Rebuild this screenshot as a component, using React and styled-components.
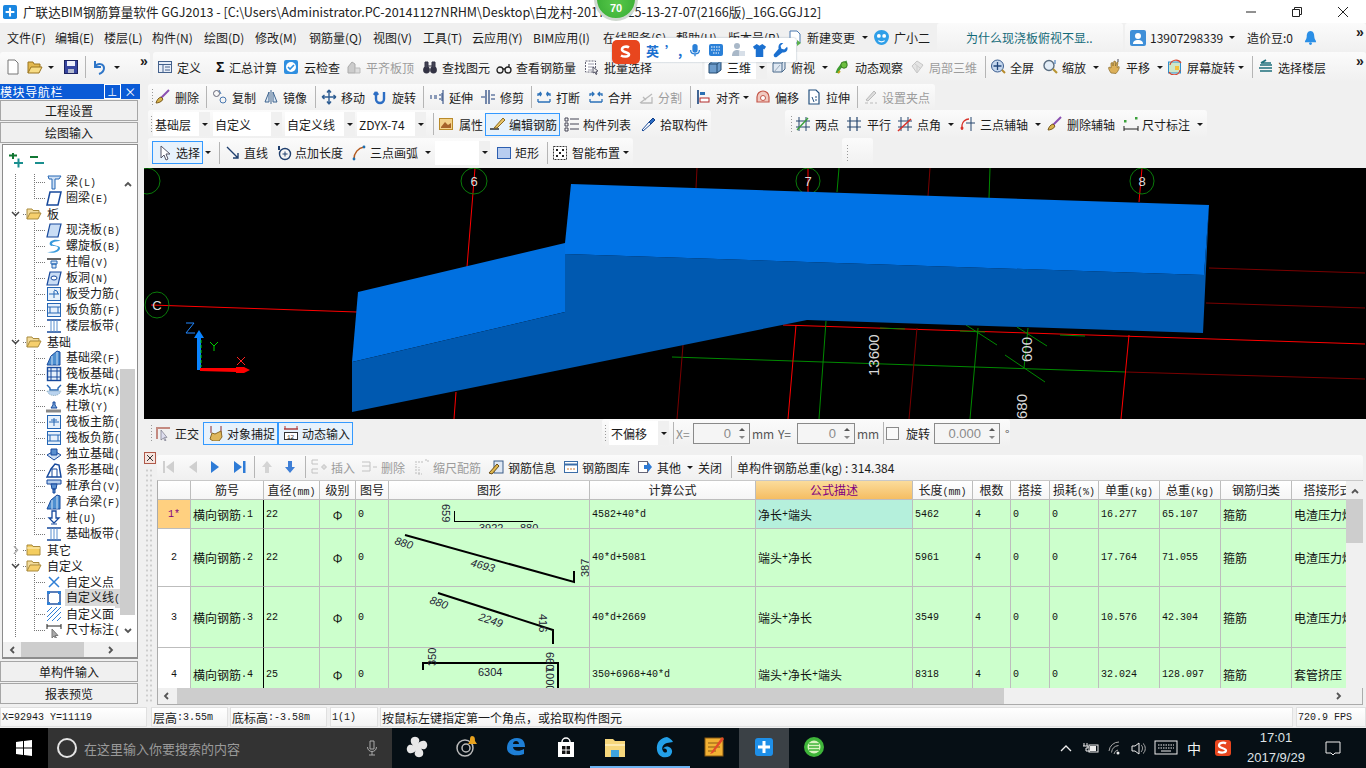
import React from 'react'
import styled, { createGlobalStyle } from 'styled-components'

const CJK = '"Noto Sans CJK SC", "Noto Sans", sans-serif'
const MONO = '"Liberation Mono", "DejaVu Sans Mono", monospace'

const GlobalStyle = createGlobalStyle`
  html, body { margin: 0; padding: 0; background: #f0f0f0; }
  body { font-family: ${CJK}; font-size: 12px; color: #1a1a1a; }
`

const Screen = styled.div`
  position: relative;
  width: 1366px;
  height: 768px;
  overflow: hidden;
  display: flex;
  flex-direction: column;
  background: #f0f0f0;
`

/* ---------- icons ---------- */
const Svg = styled.svg`
  flex: none;
  display: block;
  width: ${p => p.$s || 16}px;
  height: ${p => p.$s || 16}px;
`

const Ico = {
  page: <path d="M3 1h7l3 3v11H3z" fill="#fff" stroke="#777" />,
  open: <><path d="M1 14V3h5l1 2h6v3" fill="#e3b94f" stroke="#9a7420" /><path d="M1 14l3-6h11l-3 6z" fill="#f7dc85" stroke="#9a7420" /></>,
  save: <><rect x="1.5" y="1.5" width="13" height="13" fill="#37459f" stroke="#1c2360" /><rect x="4" y="2" width="8" height="5" fill="#eef0fa" /><rect x="5" y="10" width="6" height="4" fill="#b5bcd0" /></>,
  undo: <path d="M4 2v6h6M4 8c3-5 9-3 9 1 0 3-2 5-5 6" fill="none" stroke="#2f76c8" strokeWidth="2" />,
  define: <><rect x="1.5" y="2.5" width="13" height="11" fill="#e8eef8" stroke="#44618c" /><path d="M1.5 5.500h13M6 5.500v8M8 8h5M8 11h5" stroke="#44618c" /></>,
  sigma: <text x="3" y="13" fontSize="14" fontWeight="700" fill="#111" fontFamily="Liberation Sans">Σ</text>,
  cloud: <><rect x="1" y="1" width="14" height="14" rx="2" fill="#2f8fe0" /><circle cx="8" cy="8" r="5" fill="#fff" /><path d="M5 8l2 2 4-4" stroke="#2f8fe0" strokeWidth="1.6" fill="none" /></>,
  flat: <><path d="M2 14V8l4-5 3 2v9z" fill="#ccc" stroke="#aaa" /><path d="M9 14h5V9H9z" fill="#ddd" stroke="#bbb" /></>,
  find: <><circle cx="4.5" cy="11" r="3.4" fill="#334" /><circle cx="11.5" cy="11" r="3.4" fill="#334" /><path d="M3 3h3v6H3zM10 3h3v6h-3zM6 7h4" fill="#445" stroke="#334" /></>,
  glasses: <path d="M1 11a3 3 0 106 0 3 3 0 10-6 0M9 11a3 3 0 106 0 3 3 0 10-6 0M7 10h2M13 8V5" fill="none" stroke="#222" strokeWidth="1.3" />,
  batch: <><rect x="1.5" y="2" width="10" height="11" fill="#fff" stroke="#667" strokeDasharray="2 1" /><path d="M4 5h6M4 8h6M4 11h4" stroke="#99a" /><path d="M9 8l5 4-2 .5 1 2.5-1 .5-1-2.5-2 1z" fill="#eee" stroke="#556" /></>,
  box: <><path d="M2 5l4-3h8v9l-4 3H2z" fill="#6d9ccb" stroke="#22496e" /><path d="M2 5h8v9M10 5l4-3" fill="none" stroke="#22496e" /></>,
  top: <><path d="M2 4l3-3h9v9l-3 3H2z" fill="#dfe8f2" stroke="#49698a" /><path d="M2 4h9v9M11 4l3-3" fill="none" stroke="#49698a" /><path d="M3 13l6-7" stroke="#9ab" /></>,
  orbit: <><path d="M2 14c1-4 5-9 10-11" stroke="#3f9d32" strokeWidth="3" fill="none" /><circle cx="9" cy="6" r="3.2" fill="#6cbf3f" stroke="#3a7c22" /><path d="M5 12l-2 2" stroke="#c5a215" strokeWidth="2" /></>,
  local: <><path d="M3 7l5-5 6 4-6 8z" fill="#e4e4e4" stroke="#c6c6c6" /><path d="M6 5l5 4M8 14V7" stroke="#ccc" /></>,
  full: <><circle cx="7.5" cy="7" r="6" fill="#c6d8ee" stroke="#3a5d8f" /><path d="M7.5 3v8M3.5 7h8" stroke="#23477c" strokeWidth="1.3" /><path d="M12 11l3 3" stroke="#b58a2a" strokeWidth="2" /></>,
  zoom: <><circle cx="7" cy="6.5" r="5" fill="#e3edf7" stroke="#5a6d80" strokeWidth="1.4" /><path d="M11 10l4 4" stroke="#b79432" strokeWidth="2.2" /><path d="M13 1v4" stroke="#2e6fba" /></>,
  pan: <><path d="M5 14c-2-3-3-5-2-6l2 1V4l1.5-.5L7 7l1-5 1.5.5V7l1.500-4 1 .5-1 5 2-1c1 1-1 5-3 7z" fill="#dcb05a" stroke="#8a6a26" strokeWidth=".7" /><path d="M12 0v3" stroke="#445" /></>,
  rotate: <><rect x="1.5" y="3" width="12" height="11" fill="#cfe7c8" stroke="#2f8fcf" /><path d="M3 6a6 6 0 0111-2M13 11a6 6 0 01-11 2" fill="none" stroke="#d9472e" strokeWidth="1.2" /><rect x="8" y="7" width="4" height="4" fill="#f4c23d" /></>,
  floor: <path d="M2 6h12M1 9h13M2 12h12M3 4h10M8 1L3 4" fill="none" stroke="#1e6f7b" strokeWidth="1.7" />,
  broom: <><path d="M14 1L6 9" stroke="#8a4fb0" strokeWidth="2" /><path d="M1 14c2 0 6-1 7-4L6 8c-3 1-4 3-5 6z" fill="#d8b34a" stroke="#7a5a1e" /></>,
  copy: <><circle cx="4.5" cy="4.5" r="3" fill="none" stroke="#667" /><circle cx="11" cy="11" r="3" fill="none" stroke="#4a78b0" /><path d="M7 1l2 4" stroke="#4a78b0" /></>,
  mirror: <><path d="M2 13l4-10v10zM14 13L10 3v10z" fill="#dbe7f3" stroke="#3f648f" /><path d="M8 1v14" stroke="#3f648f" /></>,
  move: <path d="M8 1v14M1 8h14M8 1L6 3.5M8 1l2 2.5M8 15l-2-2.5M8 15l2-2.5M1 8l2.5-2M1 8l2.5 2M15 8l-2.5-2M15 8l-2.5 2" fill="none" stroke="#2d5c92" strokeWidth="1.4" />,
  spin: <path d="M4 3v7a4 4 0 008 0V3M4 3L2 6M4 3l2 3" fill="none" stroke="#2d6ec4" strokeWidth="2.4" />,
  extend: <path d="M1 7h2M1 9h2M5 7h3M5 9h3M10 6h2M10 10h2M14 1v14M13 4v8" stroke="#1f3f7a" fill="none" />,
  trim: <path d="M6 1v14M9 1v14M1 8h4M11 6h4M11 10h4" stroke="#1f3f7a" fill="none" strokeWidth="1.2" />,
  split: <path d="M2 7V5h4M14 7V5h-4M2 13h12M2 13v-3M14 13v-3M5 3L3 5l2 2M11 3l2 2-2 2" fill="none" stroke="#2a70b8" strokeWidth="1.3" />,
  merge: <path d="M2 7V5h4M14 7V5h-4M2 13h12M2 13v-3M14 13v-3M4 3l2 2-2 2M12 3l-2 2 2 2" fill="none" stroke="#2a70b8" strokeWidth="1.3" />,
  cut: <path d="M2 14l12-9M3 14h11V8M5 8l3 3" fill="none" stroke="#bbb" strokeWidth="1.3" />,
  align: <><path d="M2 1v14" stroke="#14407a" strokeWidth="1.6" /><rect x="4" y="3" width="5" height="3" fill="#2a6fb3" /><rect x="4" y="9" width="9" height="4" fill="#fff" stroke="#b02a2a" /></>,
  offset: <><path d="M2 13V8a6 6 0 0112 0v5z" fill="#f1c9c0" stroke="#c4574a" strokeWidth="1.2" /><circle cx="8" cy="9" r="2.5" fill="#fff" stroke="#c4574a" /></>,
  stretch: <><path d="M3 1h7l3 3v11H3z" fill="#fff" stroke="#24507f" strokeWidth="1.2" /><path d="M6 8l2 5M10 7v2M9 11h2" stroke="#24507f" /></>,
  grip2: <path d="M3 14h3M8 14h3M13 14h2M4 11l8-9 2 2-8 8z" fill="#ddd" stroke="#bbb" />,
  attr: <><rect x="1.5" y="2.5" width="13" height="11" fill="#f3d28a" stroke="#b98a2a" /><path d="M3 11l4-5 3 3 3-2v5H3z" fill="#a7642a" /></>,
  rebar: <><path d="M0 13h9" stroke="#222" strokeWidth="1.4" /><path d="M4 12L13 2l2 2-8 8z" fill="#e9c56a" stroke="#8a6a20" /></>,
  list: <path d="M1 2h3v3H1zM1 7h3v3H1zM1 12h3v3H1zM6 3h9M6 8h9M6 13h9" fill="none" stroke="#445" />,
  pick: <><path d="M2 14l7-8 2 2-8 7z" fill="#fff" stroke="#1f4f9c" /><path d="M9 6l4-4 2 2-4 4z" fill="#2b6cc4" stroke="#123f88" /></>,
  twoPt: <><path d="M4 1v14M11 1v14M1 5h14M1 11h14" stroke="#26466e" /><path d="M2 14L13 2" stroke="#3aa03a" strokeWidth="1.4" /></>,
  para: <path d="M4 1v14M11 1v14M1 5h14M1 11h14" stroke="#26466e" strokeWidth="1.2" />,
  angle: <><path d="M4 1v14M11 1v14M1 5h14M1 11h14" stroke="#26466e" /><path d="M1 15L14 3" stroke="#d8322a" strokeWidth="1.6" /></>,
  arc: <><path d="M2 14V9a7 7 0 017-6" fill="none" stroke="#d8322a" strokeWidth="1.3" /><circle cx="2" cy="12" r="1.5" fill="#d8322a" /><path d="M11 1v14M6 7h9" stroke="#26466e" /></>,
  dim: <><path d="M1 15V10M15 15V10M1 13h14" stroke="#222" /><rect x="1" y="4" width="2.5" height="2.5" fill="#3aa03a" /><rect x="12" y="1" width="2.5" height="2.5" fill="#3aa03a" /></>,
  cursor: <path d="M4 1v12l3-3 2 5 2-1-2-5h4z" fill="#fff" stroke="#556" />,
  line: <path d="M2 2l11 11M13 8v5H8" fill="none" stroke="#1f3f6e" strokeWidth="1.4" />,
  addLen: <><circle cx="9" cy="9" r="5.5" fill="none" stroke="#1f3f6e" strokeWidth="1.4" /><path d="M9 6.5v5M6.5 9h5" stroke="#1f3f6e" /><path d="M3 5V1" stroke="#1f3f6e" strokeWidth="2" /></>,
  arc3: <><path d="M3 14C3 8 7 3 13 2" fill="none" stroke="#b45a1e" strokeWidth="1.5" /><circle cx="3" cy="14" r="1.4" fill="#1f6fb0" /><circle cx="13" cy="2" r="1.4" fill="#1f6fb0" /></>,
  rect: <rect x="1.5" y="2.5" width="13" height="11" fill="#b8cdf0" stroke="#2d5fb0" />,
  smart: <><rect x="1.5" y="1.5" width="13" height="13" fill="#fff" stroke="#333" strokeDasharray="2 1" /><path d="M4 4h2v2H4zM10 4h2v2h-2zM4 10h2v2H4zM10 10h2v2h-2zM7 7h2v2H7z" fill="#222" /></>,
  ortho: <><path d="M2 14V3h13" stroke="#c48a80" strokeWidth="2" fill="none" /><path d="M6 5v10l2.5-2 1.5 3 1-.6-1.5-3H12z" fill="#dde" stroke="#667" strokeWidth=".6" /></>,
  snap: <><path d="M3 1v7M13 1v7" stroke="#8a2a2a" /><path d="M2 14l2-6 3 1 6-3 1 6-3 4H5z" fill="#dfb75c" stroke="#8a6a26" /></>,
  dyn: <><path d="M1 4h14" stroke="#a33" strokeWidth="1.4" /><path d="M2 1v3M14 1v3" stroke="#a33" /><rect x="1.5" y="7.5" width="13" height="7" fill="#fff" stroke="#333" /><text x="4" y="13.5" fontSize="6" fill="#222" fontFamily="Liberation Mono">12</text></>,
  first: <path d="M3 2h2v12H3zM14 2v12L6 8z" fill="#cfcfcf" />,
  prev: <path d="M12 2v12L4 8z" fill="#cfcfcf" />,
  next: <path d="M4 2v12l8-6z" fill="#2e7bd6" />,
  last: <path d="M2 2v12l8-6zM11 2h2.5v12H11z" fill="#2e7bd6" />,
  up: <path d="M8 2l5 6h-3v6H6V8H3z" fill="#d4d4d4" />,
  down: <path d="M6 2h4v6h3l-5 6-5-6h3z" fill="#3f7fd6" />,
  ins: <path d="M1 1h6M1 5h6M1 1v4M1 10h6M1 14h6M1 10v4M10 8h2M14 8h3M12 6h2v4h-2z" fill="none" stroke="#c2c2c2" />,
  del: <path d="M1 3h8M1 7h8M1 12h8M9 3v9M12 8h4" fill="none" stroke="#c2c2c2" />,
  scale: <path d="M2 15V5M5 15V8M1 3h9M11 1h3M14 1v3M4 15h4" fill="none" stroke="#bdbdbd" strokeDasharray="2 1" />,
  info: <><rect x="6" y="2" width="9" height="12" fill="#dfe8f4" stroke="#3b5c88" /><path d="M1 14L9 5l2 2-7 8z" fill="#e0b84e" stroke="#6a4e18" /></>,
  lib: <><rect x="1.5" y="2.5" width="13" height="11" fill="#fff" stroke="#3b6da8" /><path d="M1.5 5.5h13" stroke="#3b6da8" strokeWidth="2" /><path d="M4 10h2M7 10h2M10 10h2" stroke="#d07a30" /></>,
  other: <><rect x="1.5" y="2.5" width="9" height="11" fill="#fff" stroke="#667" /><path d="M7 6h4V3l4 5-4 5v-3H7z" fill="#2e7bd6" /></>
}

const TreeI = {
  beam: <path d="M2 2h13l-2 3H9v10H6V5H3z" fill="#cfe0f4" stroke="#2566b4" />,
  ring: <path d="M4 2h11l-3 13H1z" fill="#fff" stroke="#17499c" strokeWidth="1.5" />,
  slab: <path d="M4 2h11l-3 13H1z" fill="#c9ddf5" stroke="#17499c" strokeWidth="1.2" />,
  spiral: <path d="M15 3C9 0 2 3 4 7c1 2 8 0 8 3-1 3-6 4-11 4 6 2 13 0 13-4 0-3-7-2-8-4 0-2 4-3 9-3z" fill="#3a9bdc" />,
  cap: <><path d="M1 5h14" stroke="#666" strokeWidth="2" /><path d="M5 7h6v3H5zM6 10h4v4H6z" fill="#dbe7f5" stroke="#2566b4" /></>,
  hole: <><path d="M4 2h11l-3 13H1z" fill="#c9ddf5" stroke="#17499c" strokeWidth="1.2" /><ellipse cx="8" cy="8" rx="3" ry="2" fill="#fff" stroke="#17499c" /></>,
  slabF: <><rect x="1.5" y="1.5" width="13" height="13" fill="#e6f0fb" stroke="#2566b4" /><path d="M3 8h10M8 5v7" stroke="#2566b4" /><path d="M8 4a4 4 0 014 4" fill="none" stroke="#2566b4" /></>,
  slabN: <><rect x="1.5" y="1.5" width="13" height="13" fill="#e6f0fb" stroke="#2566b4" /><path d="M1.5 5h13M1.5 11h13M4 5v6M12 5v6" stroke="#2566b4" /></>,
  band: <><path d="M1 2h14M1 14h14" stroke="#17499c" strokeWidth="1.4" /><path d="M5 2v12M8 2v12M11 2v12" stroke="#5b8fd0" /></>,
  fbeam: <><path d="M1 15l4-9 6-5 3 1v13z" fill="#4d8fd0" stroke="#17499c" /><path d="M6 15V6M11 15V2" stroke="#cfe0f4" /></>,
  raft: <><rect x="1.5" y="1.5" width="13" height="13" fill="#e6f0fb" stroke="#17499c" strokeWidth="1.4" /><path d="M5 1v14M11 1v14M1 5h14M1 11h14" stroke="#17499c" /></>,
  pit: <><path d="M1 3l3 3v2h8V6l3-3" fill="none" stroke="#2566b4" strokeWidth="1.4" /><path d="M1 9c2 6 12 6 14 0H1z" fill="#b9d3ef" stroke="#8ab" strokeDasharray="1 1" /></>,
  pier: <><path d="M0 13h15" stroke="#888" strokeWidth="3" /><path d="M5 10h6L9 7V4H7v3z" fill="#7ba7d9" stroke="#17499c" /></>,
  raftM: <><rect x="1.5" y="1.5" width="13" height="13" fill="#e6f0fb" stroke="#2566b4" /><path d="M3 8h10M8 4v8M5 6h6" stroke="#2566b4" /></>,
  iso: <><path d="M1 9l7-4 7 4-7 5z" fill="#cfe0f4" stroke="#17499c" /><path d="M5 3h6v6H5z" fill="#5a8fcf" stroke="#17499c" /></>,
  strip: <><path d="M1 15l4-8 4-5 4 1 2 12z" fill="#fff" stroke="#17499c" strokeWidth="1.5" /><path d="M6 15V7h5v8" fill="none" stroke="#17499c" /></>,
  capP: <><path d="M1 2h14v4H1z" fill="#b7d0ee" stroke="#17499c" /><path d="M5 6h6l-1 5H6zM7 11h2v4H7z" fill="#5a8fcf" stroke="#17499c" /></>,
  pile: <><path d="M6 1h4v7h3l-5 5-5-5h3z" fill="#fff" stroke="#17499c" strokeWidth="1.3" /><path d="M5 14h6" stroke="#17499c" /></>,
  point: <path d="M3 3l10 10M13 3L3 13" stroke="#2f7fd6" strokeWidth="1.5" />,
  cline: <><rect x="2" y="2" width="12" height="12" fill="none" stroke="#17499c" strokeWidth="1.4" /><path d="M1 1h3v3H1zM12 1h3v3h-3zM1 12h3v3H1zM12 12h3v3h-3z" fill="#2f7fd6" /></>,
  face: <path d="M1 6l5-5M1 11L11 1M1 15L15 1M6 15l9-9M11 15l4-4" stroke="#2f7fd6" />,
  dimT: <><path d="M1 2v5M15 2v5M1 4h14" stroke="#222" /><path d="M6 7v9l2-2 1.5 2.5 1-.5-1.5-2.5H12z" fill="#aaa" stroke="#777" /></>
}

const Ic = ({ n, s }) => <Svg $s={s} viewBox="0 0 16 16">{Ico[n]}</Svg>

const Caret = styled.i`
  flex: none;
  width: 0;
  height: 0;
  margin-left: ${p => p.$ml ?? 6}px;
  border-left: 3px solid transparent;
  border-right: 3px solid transparent;
  border-top: 3px solid #1a1a1a;
`

/* ---------- mixed latin / cjk text, latin looks like a bitmap mono ---------- */
const Latin = styled.span`
  font-family: ${MONO};
  font-size: 10px;
`
const Mixed = ({ children }) =>
  String(children).split(/([\x20-\x7e]+)/).map((s, k) =>
    /^[\x20-\x7e]+$/.test(s) ? <Latin key={k}>{s}</Latin> : s)

/* ---------- window chrome ---------- */
const TitleBar = styled.div`
  flex: none;
  height: 23px;
  background: #fff;
  display: flex;
  align-items: center;
  padding-left: 3px;
  font-size: 12.6px;
  white-space: nowrap;
`
const TitleText = styled.span`
  margin-left: 6px;
  color: #222;
`
const WinButtons = styled.div`
  margin-left: auto;
  display: flex;
`
const WinButton = styled.div`
  width: 46px;
  display: flex;
  justify-content: center;
`

/* ---------- toolbars ---------- */
const ToolRow = styled.div`
  flex: none;
  height: ${p => p.$h}px;
  display: flex;
  align-items: stretch;
`
const Strip = styled.div`
  flex: none;
  width: ${p => p.$w}px;
  margin-left: ${p => p.$ml}px;
  padding-left: ${p => p.$pl || 0}px;
  box-sizing: border-box;
  display: flex;
  align-items: center;
  background: ${p => p.$plain ? 'transparent' : 'linear-gradient(#fbfbfb, #f0f0f0)'};
  border-radius: 3px;
`
const Tool = styled.div`
  flex: none;
  box-sizing: border-box;
  width: ${p => p.$w}px;
  display: flex;
  align-items: center;
  height: 100%;
  white-space: nowrap;
  color: ${p => p.$off ? '#9c9c9c' : '#1c1c1c'};
`
const ToolLabel = styled.span`
  margin-left: ${p => p.$gap ?? 4}px;
`
const ActiveTool = styled.div`
  flex: none;
  box-sizing: border-box;
  width: ${p => p.$w}px;
  height: ${p => p.$h || 23}px;
  padding-left: 4px;
  display: flex;
  align-items: center;
  white-space: nowrap;
  background: #e7f2fc;
  border: 1px solid #3399ff;
`
const Sep = styled.div`
  flex: none;
  width: ${p => p.$w}px;
  height: 22px;
  display: flex;
  justify-content: center;
  &::before { content: ''; width: 1px; background: #b5b5b5; }
`
const Grip = styled.div`
  flex: none;
  width: ${p => p.$w}px;
  height: 18px;
  background: radial-gradient(circle, #9a9a9a 0.8px, transparent 1px) 1px 0 / 3px 3px repeat-y;
`
const Drop = styled.div`
  flex: none;
  box-sizing: border-box;
  width: ${p => p.$w}px;
  height: 24px;
  display: flex;
  align-items: center;
  padding-left: 2px;
  background: #fff;
`
const DropBtn = styled.div`
  width: 11px;
  height: 100%;
  margin-left: auto;
  background: #f0f0f0;
  display: flex;
  align-items: center;
  justify-content: center;
`
const DropGap = styled.div`
  flex: none;
  width: ${p => p.$w}px;
`
const Chevrons = styled.span`
  flex: none;
  font-family: "Liberation Sans", sans-serif;
  font-size: 14px;
  line-height: 1;
  margin-top: -12px;
  font-weight: 700;
`
const Plain = styled.span`
  flex: none;
  color: ${p => p.$c || '#1c1c1c'};
  width: ${p => p.$w}px;
  white-space: nowrap;
`

const renderItem = (it, w, k) => {
  if (it.sep) return <Sep key={k} $w={w} />
  if (it.grip) return <Grip key={k} $w={w} />
  if (it.sel !== undefined) {
    return (
      <React.Fragment key={k}>
        <Drop $w={it.sw}>{it.sel}<DropBtn><Caret $ml={0} /></DropBtn></Drop>
        <DropGap $w={w - it.sw} />
      </React.Fragment>
    )
  }
  if (it.active) {
    return (
      <React.Fragment key={k}>
        <ActiveTool $w={it.bw}>
          {it.i && <Ic n={it.i} />}<ToolLabel $gap={it.lg}>{it.t}</ToolLabel>
        </ActiveTool>
        <DropGap $w={w - it.bw} />
      </React.Fragment>
    )
  }
  if (it.txt) return <Plain key={k} $w={w} $c={it.c}>{it.txt}</Plain>
  if (it.node) return <Tool key={k} $w={w}>{it.node}</Tool>
  return (
    <Tool key={k} $w={w} $off={it.off}>
      {it.i && <Ic n={it.i} />}
      {it.t && <ToolLabel $gap={it.lg}>{it.t}</ToolLabel>}
      {it.caret && <Caret $ml={it.cm} />}
    </Tool>
  )
}

// strips are laid out in flow, item width is the distance to the next item
const Bar = ({ h, origin, strips, plain }) => {
  let at = origin
  return (
    <ToolRow $h={h}>
      {strips.map((s, si) => {
        const ml = s.from - at
        at = s.to
        return (
          <Strip key={si} $w={s.to - s.from} $ml={ml} $pl={s.items[0].x - s.from} $plain={plain || s.plain}>
            {s.items.map((it, k) => {
              const nx = k + 1 < s.items.length ? s.items[k + 1].x : s.to
              return renderItem(it, nx - it.x, k)
            })}
          </Strip>
        )
      })}
    </ToolRow>
  )
}

const t = (x, i, label, o) => ({ x, i, t: label, ...o })
const sep = x => ({ x, sep: true })
const grip = x => ({ x, grip: true })

const menuStrips = [
  {
    from: 0, to: 937, plain: true,
    items: [
      { x: 7, txt: '文件(F)' }, { x: 55, txt: '编辑(E)' }, { x: 104, txt: '楼层(L)' }, { x: 152, txt: '构件(N)' },
      { x: 204, txt: '绘图(D)' }, { x: 255, txt: '修改(M)' }, { x: 309, txt: '钢筋量(Q)' }, { x: 373, txt: '视图(V)' },
      { x: 423, txt: '工具(T)' }, { x: 472, txt: '云应用(Y)' }, { x: 533, txt: 'BIM应用(I)' }, { x: 603, txt: '在线服务(S)' },
      { x: 676, txt: '帮助(H)' }, { x: 728, txt: '版本号(B)' },
      { x: 787, node: <><Svg viewBox="0 0 16 16"><path d="M3 1h7l3 3v9H3z" fill="#fff" stroke="#4a78b0" /><path d="M10 10l4 3-4 3z" fill="#5ab04a" /></Svg><ToolLabel $gap={4}>新建变更</ToolLabel><Caret $ml={7} /></> },
      { x: 873, node: <><Svg $s={17} viewBox="0 0 16 16"><path d="M8 1c4 0 7 3 7 6 0 4-3 8-7 8s-7-4-7-8c0-3 3-6 7-6z" fill="#2f9fe8" /><circle cx="5.5" cy="6.5" r="1.8" fill="#fff" /><circle cx="10.5" cy="6.5" r="1.8" fill="#fff" /><path d="M5 11c2 1.5 4 1.5 6 0" stroke="#fff" fill="none" /></Svg><ToolLabel $gap={4}>广小二</ToolLabel></> }
    ]
  },
  {
    from: 937, to: 1123,
    items: [{ x: 966, txt: '为什么现浇板俯视不显..', c: '#136a78' }]
  },
  {
    from: 1125, to: 1366,
    items: [
      { x: 1130, node: <Svg viewBox="0 0 16 16"><rect width="16" height="16" rx="2" fill="#3f8fd8" /><circle cx="8" cy="6" r="3" fill="#fff" /><path d="M3 14c0-3 2-4 5-4s5 1 5 4z" fill="#fff" /></Svg> },
      { x: 1150, node: <>13907298339<Caret $ml={6} /></> },
      { x: 1247, txt: '造价豆:0' },
      { x: 1303, node: <Svg $s={15} viewBox="0 0 16 16"><path d="M8 1c3 0 4 3 4 6 0 3 2 4 2 6H2c0-2 2-3 2-6 0-3 1-6 4-6z" fill="#2b8fe6" /><circle cx="8" cy="14.5" r="1.5" fill="#2b8fe6" /></Svg> },
      { x: 1356, node: <Chevrons>»</Chevrons> }
    ]
  }
]

const topStrips = [
  {
    from: 0, to: 150,
    items: [
      t(5, 'page'), t(27, 'open', null, { caret: true, cm: 5 }), t(63, 'save'), sep(79), t(91, 'undo', null, { caret: true, cm: 7 }),
      { x: 140, node: <Chevrons>»</Chevrons> }
    ]
  },
  {
    from: 153, to: 702,
    items: [
      t(157, 'define', '定义'), t(213, 'sigma', '汇总计算', { lg: 0 }), t(283, 'cloud', '云检查', { lg: 5 }),
      t(346, 'flat', '平齐板顶', { off: true }), t(422, 'find', '查找图元'), t(496, 'glasses', '查看钢筋量'), t(584, 'batch', '批量选择')
    ]
  },
  {
    from: 704, to: 1366,
    items: [
      { x: 705, node: <Drop $w={62}><Ic n="box" /><ToolLabel>三维</ToolLabel><DropBtn><Caret $ml={0} /></DropBtn></Drop> },
      t(771, 'top', '俯视', { caret: true, cm: 7 }), t(835, 'orbit', '动态观察'), t(909, 'local', '局部三维', { off: true }), sep(981),
      t(990, 'full', '全屏'), t(1042, 'zoom', '缩放', { caret: true, cm: 7 }), t(1106, 'pan', '平移', { caret: true, cm: 7 }),
      t(1167, 'rotate', '屏幕旋转', { caret: true, cm: 3 }), sep(1247), t(1258, 'floor', '选择楼层'),
      { x: 1356, node: <Chevrons>»</Chevrons> }
    ]
  }
]

const editStrips = [
  {
    from: 148, to: 935,
    items: [
      grip(150), t(155, 'broom', '删除'), sep(200), t(212, 'copy', '复制'), t(263, 'mirror', '镜像'), sep(310), t(321, 'move', '移动'),
      t(372, 'spin', '旋转'), sep(417), t(429, 'extend', '延伸'), t(480, 'trim', '修剪'), sep(526), t(536, 'split', '打断'),
      t(588, 'merge', '合并'), t(638, 'cut', '分割', { off: true }), sep(684), t(696, 'align', '对齐', { caret: true, cm: 3 }),
      t(755, 'offset', '偏移'), t(806, 'stretch', '拉伸'), sep(852), t(862, 'grip2', '设置夹点', { off: true })
    ]
  }
]

const attrStrips = [
  {
    from: 148, to: 711,
    items: [
      grip(149), { x: 153, sel: '基础层', sw: 57 }, { x: 213, sel: '自定义', sw: 69 }, { x: 285, sel: '自定义线', sw: 70 },
      { x: 357, sel: 'ZDYX-74', sw: 69 }, sep(428), t(438, 'attr', '属性', { lg: 5 }),
      { x: 485, active: true, i: 'rebar', t: '编辑钢筋', bw: 75, lg: 3 }, t(564, 'list', '构件列表', { lg: 3 }), t(640, 'pick', '拾取构件')
    ]
  },
  {
    from: 785, to: 1207,
    items: [
      grip(789), t(795, 'twoPt', '两点'), t(846, 'para', '平行', { lg: 5 }), t(897, 'angle', '点角', { caret: true, cm: 7 }),
      t(960, 'arc', '三点辅轴', { caret: true, cm: 7 }), t(1047, 'broom', '删除辅轴'), t(1123, 'dim', '尺寸标注', { lg: 3, caret: true, cm: 7 })
    ]
  }
]

const drawStrips = [
  {
    from: 148, to: 633,
    items: [
      { x: 152, active: true, i: 'cursor', t: '选择', bw: 51, lg: 3 }, { x: 205, node: <Caret $ml={0} /> }, sep(214),
      t(225, 'line', '直线', { lg: 3 }), t(276, 'addLen', '点加长度', { lg: 3 }), t(351, 'arc3', '三点画弧', { lg: 3, caret: true, cm: 7 }),
      { x: 435, sel: '', sw: 55 }, t(496, 'rect', '矩形', { lg: 3 }), sep(542), t(552, 'smart', '智能布置', { caret: true, cm: 3 })
    ]
  },
  { from: 842, to: 873, items: [grip(845)] }
]

const Spin = styled.div`
  flex: none;
  box-sizing: border-box;
  width: ${p => p.$w}px;
  height: 21px;
  border: 1px solid #8a8a8a;
  background: #f5f5f5;
  color: #8a8a8a;
  display: flex;
  align-items: center;
  justify-content: flex-end;
  font-size: 13px;
  font-family: "Liberation Sans", sans-serif;
`
const SpinArrows = styled.div`
  width: 14px;
  margin-left: 4px;
  display: flex;
  flex-direction: column;
  align-items: center;
  gap: 5px;
`
const ArrowUp = styled.i`
  width: 0; height: 0;
  border-left: 3px solid transparent;
  border-right: 3px solid transparent;
  border-bottom: 3px solid #555;
`
const ArrowDown = styled(ArrowUp)`
  border-bottom: 0;
  border-top: 3px solid #888;
`
const Check = styled.div`
  width: 11px;
  height: 11px;
  border: 1px solid #8a8a8a;
  background: #fafafa;
`
const spin = (w, v) => <Spin $w={w}>{v}<SpinArrows><ArrowUp /><ArrowDown /></SpinArrows></Spin>

const snapStrips = [
  {
    from: 148, to: 356, plain: true,
    items: [
      grip(149), t(155, 'ortho', '正交'),
      { x: 203, active: true, i: 'snap', t: '对象捕捉', bw: 75, h: 24, lg: 3 },
      { x: 278, active: true, i: 'dyn', t: '动态输入', bw: 75, lg: 3 }
    ]
  },
  {
    from: 602, to: 1010,
    items: [
      grip(603), { x: 609, sel: '不偏移', sw: 60 }, sep(670), { x: 676, txt: 'X=', c: '#8a8a8a' }, { x: 693, node: spin(57, 0) },
      { x: 752, txt: 'mm', c: '#555' }, { x: 778, txt: 'Y=', c: '#555' }, { x: 797, node: spin(58, 0) }, { x: 857, txt: 'mm', c: '#555' },
      sep(880), { x: 886, node: <Check /> }, { x: 906, txt: '旋转' }, { x: 934, node: spin(66, '0.000') }, { x: 1005, txt: '°', c: '#555' }
    ]
  }
]

const rebarBar = [
  {
    from: 157, to: 1363,
    items: [
      t(160, 'first'), t(185, 'prev'), t(207, 'next'), t(232, 'last'), sep(249), t(259, 'up'), t(282, 'down'), sep(300),
      t(311, 'ins', '插入', { off: true }), t(361, 'del', '删除', { off: true }), t(414, 'scale', '缩尺配筋', { off: true, lg: 3 }),
      t(488, 'info', '钢筋信息'), t(563, 'lib', '钢筋图库', { lg: 3 }), t(637, 'other', '其他', { caret: true, cm: 6 }),
      { x: 698, txt: '关闭' }, sep(726), { x: 737, txt: '单构件钢筋总重(kg) : 314.384' }
    ]
  }
]

/* ---------- sidebar ---------- */
const Workspace = styled.div`
  flex: 1;
  min-height: 0;
  display: flex;
  padding-top: 2px;
`
const Sidebar = styled.div`
  flex: none;
  width: 140px;
  display: flex;
  flex-direction: column;
  padding-bottom: 3px;
`
const NavHead = styled.div`
  height: 15px;
  background: #0a5ad6;
  color: #fff;
  font-size: 12px;
  line-height: 15px;
  display: flex;
  align-items: center;
  letter-spacing: 0.6px;
`
const Pin = styled.div`
  margin-left: auto;
  width: 15px;
  height: 13px;
  border: 1px solid #fff;
  font-size: 10px;
  line-height: 13px;
  text-align: center;
`
const CloseX = styled.span`
  width: 19px;
  text-align: center;
  font-size: 12px;
`
const NavTab = styled.div`
  flex: none;
  height: 21px;
  margin: 1px 0 0 0;
  width: 138px;
  box-sizing: border-box;
  border: 1px solid #a6a6a6;
  background: #f0f0f0;
  text-align: center;
  line-height: 19px;
`
const TreeBox = styled.div`
  flex: 1;
  min-height: 0;
  width: 136px;
  margin: 1px 0 1px 2px;
  box-sizing: border-box;
  border: 1px solid #8c8c8c;
  border-bottom-width: 2px;
  background: #fff;
  display: flex;
  flex-direction: column;
`
const TreeTools = styled.div`
  flex: none;
  height: 29px;
  display: flex;
  align-items: center;
  gap: 5px;
  padding-left: 5px;
`
const TreeBody = styled.div`
  flex: 1;
  min-height: 0;
  display: flex;
`
const TreeList = styled.div`
  width: 117px;
  overflow: hidden;
`
const TreeRow = styled.div`
  position: relative;
  height: 16px;
  display: flex;
  align-items: center;
  white-space: nowrap;
  padding-left: ${p => p.$leaf ? 43 : 23}px;
  --dot: repeating-linear-gradient(to bottom, #777 0 1px, transparent 1px 2px);
  background:
    var(--dot) 12px 0 / 1px 100% no-repeat,
    ${p => p.$leaf ? `var(--dot) 31px 0 / 1px ${p.$last ? '50%' : '100%'} no-repeat,` : ''}
    repeating-linear-gradient(to right, #777 0 1px, transparent 1px 2px) ${p => p.$leaf ? '31px' : '20px'} 50% / ${p => p.$leaf ? '12px' : '4px'} 1px no-repeat;
`
const TreeText = styled.span`
  margin-left: ${p => p.$leaf ? 3 : 4}px;
  padding: 0 1px;
  background: ${p => p.$sel ? '#d9d9d9' : '#fff'};
  line-height: 16px;
`
const Chevron = styled.svg`
  position: absolute;
  left: 8px;
  top: 4px;
  width: 9px;
  height: 8px;
`
const VScroll = styled.div`
  flex: none;
  width: ${p => p.$w || 15}px;
  display: flex;
  flex-direction: column;
  align-items: center;
  background: ${p => p.$bg || '#fff'};
`
const ScrollThumb = styled.div`
  flex: none;
  width: 100%;
  margin-top: ${p => p.$mt}px;
  height: ${p => p.$h}px;
  background: #cdcdcd;
`
const HScroll = styled.div`
  flex: none;
  height: ${p => p.$h || 15}px;
  background: #f0f0f0;
  display: flex;
  align-items: center;
`
const HThumb = styled.div`
  flex: none;
  height: 100%;
  width: ${p => p.$w}px;
  margin-left: ${p => p.$ml}px;
  background: #cdcdcd;
`
const ChevSvg = styled.svg`
  flex: none;
  width: 8px;
  height: 8px;
  margin-left: ${p => p.$ml || 0}px;
  margin-top: ${p => p.$mt || 0}px;
`
const Chev = ({ d, ml, mt, c = '#555' }) => (
  <ChevSvg $ml={ml} $mt={mt} viewBox="0 0 8 8"><path d={d} fill="none" stroke={c} strokeWidth="1.8" /></ChevSvg>
)
const Folder = ({ open }) => (
  <Svg viewBox="0 0 16 14" $s={16}>
    {open
      ? <><path d="M1 12V2h5l1 1.5h6V6" fill="#f3dc9c" stroke="#a98a3c" /><path d="M1 12l3-6h11l-3 6z" fill="#f6cf6d" stroke="#a98a3c" /></>
      : <><path d="M1 12V2h5l1 1.5h7V12z" fill="#f4cd5f" stroke="#a98a3c" /><path d="M1 5h13" stroke="#fff3c8" /></>}
  </Svg>
)

const tree = [
  { i: 'beam', t: '梁(L)' }, { i: 'ring', t: '圈梁(E)', last: 1 },
  { f: 'o', t: '板' },
  { i: 'slab', t: '现浇板(B)' }, { i: 'spiral', t: '螺旋板(B)' }, { i: 'cap', t: '柱帽(V)' }, { i: 'hole', t: '板洞(N)' },
  { i: 'slabF', t: '板受力筋(' }, { i: 'slabN', t: '板负筋(F)' }, { i: 'band', t: '楼层板带(', last: 1 },
  { f: 'o', t: '基础' },
  { i: 'fbeam', t: '基础梁(F)' }, { i: 'raft', t: '筏板基础(' }, { i: 'pit', t: '集水坑(K)' }, { i: 'pier', t: '柱墩(Y)' },
  { i: 'raftM', t: '筏板主筋(' }, { i: 'slabN', t: '筏板负筋(' }, { i: 'iso', t: '独立基础(' }, { i: 'strip', t: '条形基础(' },
  { i: 'capP', t: '桩承台(V)' }, { i: 'fbeam', t: '承台梁(F)' }, { i: 'pile', t: '桩(U)' }, { i: 'band', t: '基础板带(', last: 1 },
  { f: 'c', t: '其它' },
  { f: 'o', t: '自定义' },
  { i: 'point', t: '自定义点' }, { i: 'cline', t: '自定义线(', sel: 1 }, { i: 'face', t: '自定义面' }, { i: 'dimT', t: '尺寸标注(', last: 1 }
]

const TreeNode = ({ n }) => n.f ? (
  <TreeRow>
    <Chevron viewBox="0 0 9 8">
      <path d={n.f === 'o' ? 'M1 2l3.5 3.5L8 2' : 'M3 0l3.5 4L3 8'} fill="none" stroke={n.f === 'o' ? '#444' : '#aaa'} strokeWidth="1.5" />
    </Chevron>
    <Folder open={n.f === 'o'} />
    <TreeText>{n.t}</TreeText>
  </TreeRow>
) : (
  <TreeRow $leaf $last={n.last}>
    <Svg viewBox="0 0 16 16">{TreeI[n.i]}</Svg>
    <TreeText $leaf $sel={n.sel}><Mixed>{n.t}</Mixed></TreeText>
  </TreeRow>
)

const Side = () => (
  <Sidebar>
    <NavHead>模块导航栏<Pin>⊥</Pin><CloseX>×</CloseX></NavHead>
    <NavTab>工程设置</NavTab>
    <NavTab>绘图输入</NavTab>
    <TreeBox>
      <TreeTools>
        <Svg viewBox="0 0 16 16"><path d="M1 3.5h8M5 1v6" stroke="#173" strokeWidth="2" /><path d="M6 11h9M10.5 6.5v9" stroke="#1a8f8f" strokeWidth="2" /></Svg>
        <Svg viewBox="0 0 16 16"><path d="M1 5h8" stroke="#173" strokeWidth="2" /><path d="M6 11h9" stroke="#1a8f8f" strokeWidth="2" /></Svg>
      </TreeTools>
      <TreeBody>
        <TreeList>{tree.map((n, k) => <TreeNode key={k} n={n} />)}</TreeList>
        <VScroll>
          <Chev d="M1 6l3-3 3 3" mt={6} />
          <ScrollThumb $mt={181} $h={246} />
          <Chev d="M1 2l3 3 3-3" mt={12} />
        </VScroll>
      </TreeBody>
      <HScroll>
        <Chev d="M6 1L3 4l3 3" ml={5} />
        <HThumb $ml={5} $w={63} />
        <Chev d="M2 1l3 3-3 3" ml={23} />
      </HScroll>
    </TreeBox>
    <NavTab>单构件输入</NavTab>
    <NavTab>报表预览</NavTab>
  </Sidebar>
)

/* ---------- 3d view ---------- */
const View = styled.svg`
  flex: none;
  display: block;
  width: 1222px;
  height: 251px;
  margin-top: 1px;
  background: #000;
`
const R = '#ff0000'
const DR = '#7a0000'
const G = '#008a00'
const lines = [
  [DR, 697, 168, 696, 188], [R, 808, 168, 808, 192], [G, 839, 168, 837, 192], [DR, 930, 168, 928, 196], [G, 990, 168, 989, 198],
  [R, 1142, 168, 1139, 202], [DR, 1209, 268, 1365, 273], [DR, 1206, 303, 1365, 308],
  [R, 475, 168, 467, 267], [R, 456, 392, 454, 419], [R, 151, 305, 357, 312],
  [R, 783, 325, 1365, 344], [G, 880, 328, 905, 329], [G, 960, 331, 985, 332], [G, 1060, 335, 1085, 336],
  [G, 672, 357, 1126, 372], [DR, 1126, 372, 1365, 379],
  [R, 796, 325, 788, 419], [G, 826, 321, 819, 419], [DR, 683, 345, 677, 419], [DR, 917, 328, 909, 419],
  [G, 978, 328, 970, 419], [G, 1028, 328, 1024, 368], [R, 1129, 335, 1121, 419],
  [G, 966, 325, 997, 345], [G, 1017, 327, 1047, 346], [G, 1005, 355, 1045, 382]
]
const axes = [
  ['', 147, 181, 13, 13], ['6', 474, 181, 13, 13], ['7', 808, 181, 12, 13], ['8', 1142, 181, 12, 13], ['C', 157, 305, 12, 13]
]
const Scene = () => (
  <View viewBox="144 168 1222 251">
    {lines.map(([c, a, b, d, e], k) => <line key={k} x1={a} y1={b} x2={d} y2={e} stroke={c} />)}
    {axes.map(([l, x, y, rx, ry], k) => (
      <g key={k}>
        <ellipse cx={x} cy={y} rx={rx} ry={ry} fill="none" stroke="#0a7a0a" />
        {l && <text x={x} y={y + 5} fontSize="13" fill="#ddd" textAnchor="middle" fontFamily="Liberation Sans">{l}</text>}
      </g>
    ))}
    <polygon points="358,292 565,243 565,312 352,362" fill="#0070e0" />
    <polygon points="352,362 565,312 565,254 1204,275 1209,205 1203,333 807,320 352,412" fill="#0059b0" />
    <polygon points="571,184 1209,205 1204,275 565,254 565,243" fill="#0073e6" />
    <g fontFamily="Liberation Sans" fontSize="15" fill="#d8d8d8">
      <text transform="translate(879,376) rotate(-90)">13600</text>
      <text transform="translate(1032,362) rotate(-90)">600</text>
      <text transform="translate(1027,419) rotate(-90)">680</text>
    </g>
    <path d="M197 370h4v-32h3l-5-8-5 8h3z" fill="#0a84ff" />
    <path d="M200 368h36v-1h8l6 3-6 3h-8v-1l-36-1z" fill="#ff0000" />
    <path d="M201 340v27" stroke="#00d000" strokeDasharray="3 2" />
    <g fill="none" strokeWidth="1">
      <path d="M186 323h8l-8 10h9" stroke="#2288ff" />
      <path d="M210 342l4 4 4-4M214 346v5" stroke="#00d000" />
      <path d="M237 357l8 8M245 357l-8 8" stroke="#ff2020" />
    </g>
  </View>
)

/* ---------- rebar grid ---------- */
const Panel = styled.div`
  flex: none;
  height: 258px;
  display: flex;
`
const PanelGrip = styled.div`
  flex: none;
  width: 13px;
  padding-top: 5px;
  display: flex;
  flex-direction: column;
  gap: 4px;
`
const GripDots = styled.div`
  flex: 1;
  width: 8px;
  margin-left: 1px;
  margin-bottom: 2px;
  background: radial-gradient(circle, #cdcdcd 1px, transparent 1.2px) 0 0 / 4px 5px;
`
const PanelBody = styled.div`
  flex: none;
  width: 1206px;
  padding-top: 8px;
  display: flex;
  flex-direction: column;
`
const Frame = styled.div`
  flex: none;
  box-sizing: border-box;
  height: 225px;
  margin-top: 1px;
  border: 1px solid #ababab;
  border-top-color: #c8c8c8;
  display: flex;
  flex-direction: column;
  background: #f0f0f0;
`
const FrameTop = styled.div`
  flex: none;
  height: 207px;
  display: flex;
`
const GridView = styled.div`
  flex: none;
  width: 1188px;
  overflow: hidden;
`
const Grid = styled.div`
  display: grid;
  grid-template-columns: 33px 73px 56px 36px 33px 201px 166px 157px 60px 38px 39px 49px 61px 61px 71px 72px;
  grid-template-rows: 19px 29px 58px 61px 54px;
`
const Head = styled.div`
  box-sizing: border-box;
  border-right: 1px solid #bdbdbd;
  border-bottom: 1px solid #bdbdbd;
  background: ${p => p.$hot ? 'linear-gradient(#fbdc9b, #f5bd62)' : 'linear-gradient(#fff, #f5f5f5)'};
  color: ${p => p.$hot ? '#800080' : '#222'};
  text-align: center;
  line-height: 18px;
  white-space: nowrap;
  overflow: hidden;
`
const Cell = styled.div`
  box-sizing: border-box;
  border-right: 1px solid ${p => p.$bar ? '#000' : '#bdbdbd'};
  border-bottom: 1px solid #bdbdbd;
  background: ${p => p.$bg || '#ccffcc'};
  color: ${p => p.$c || '#111'};
  display: flex;
  align-items: center;
  justify-content: ${p => p.$center ? 'center' : 'flex-start'};
  padding-left: ${p => p.$center ? 0 : 2}px;
  white-space: nowrap;
  overflow: hidden;
`
const ShapeCell = styled.div`
  box-sizing: border-box;
  border-right: 1px solid #bdbdbd;
  border-bottom: 1px solid #bdbdbd;
  background: #ccffcc;
  overflow: hidden;
`
const Shape = styled.svg`
  display: block;
  width: 200px;
  height: 100%;
`
const Bend = styled.path`
  fill: none;
  stroke: #000;
  stroke-width: 2;
`
const Dim = styled.text`
  font-family: "Liberation Sans", sans-serif;
  font-size: 11px;
  fill: #223;
`

const heads = ['', '筋号', '直径(mm)', '级别', '图号', '图形', '计算公式', '公式描述', '长度(mm)', '根数', '搭接', '损耗(%)', '单重(kg)', '总重(kg)', '钢筋归类', '搭接形式']

const shapes = [
  <Shape key="a" viewBox="388 499 200 28">
    <path d="M453.5 510v10M453 520.5h79" stroke="#000" strokeWidth="1" fill="none" />
    <Dim transform="translate(441,503) rotate(90)">659</Dim>
    <Dim x="478" y="531">3922</Dim>
    <Dim x="519" y="531">880</Dim>
  </Shape>,
  <Shape key="b" viewBox="388 528 200 57">
    <Bend d="M404 534L573 581V570" />
    <Dim fontStyle="italic" transform="translate(393,543) rotate(17)">880</Dim>
    <Dim fontStyle="italic" transform="translate(469,565) rotate(15)">4693</Dim>
    <Dim transform="translate(588,576) rotate(-90)">387</Dim>
  </Shape>,
  <Shape key="c" viewBox="388 586 200 60">
    <Bend d="M437 592L552 629V643" />
    <Dim fontStyle="italic" transform="translate(428,602) rotate(20)">880</Dim>
    <Dim fontStyle="italic" transform="translate(477,619) rotate(18)">2249</Dim>
    <Dim transform="translate(538,613) rotate(90)">416</Dim>
  </Shape>,
  <Shape key="d" viewBox="388 647 200 53">
    <Bend d="M422 669V662H557V700" />
    <Dim transform="translate(435,665) rotate(-90)">350</Dim>
    <Dim x="477" y="675">6304</Dim>
    <Dim transform="translate(545,651) rotate(90)">660</Dim>
    <Dim transform="translate(545,666) rotate(90)">1000</Dim>
  </Shape>
]

const rows = [
  ['1*', '横向钢筋.1', '22', 'Φ', '0', '4582+40*d', '净长+端头', '5462', '4', '0', '0', '16.277', '65.107', '箍筋', '电渣压力焊'],
  ['2', '横向钢筋.2', '22', 'Φ', '0', '40*d+5081', '端头+净长', '5961', '4', '0', '0', '17.764', '71.055', '箍筋', '电渣压力焊'],
  ['3', '横向钢筋.3', '22', 'Φ', '0', '40*d+2669', '端头+净长', '3549', '4', '0', '0', '10.576', '42.304', '箍筋', '电渣压力焊'],
  ['4', '横向钢筋.4', '25', 'Φ', '0', '350+6968+40*d', '端头+净长+端头', '8318', '4', '0', '0', '32.024', '128.097', '箍筋', '套管挤压']
]

const RebarRow = ({ r, k }) => {
  const [no, name, dia, grade, fig, formula, desc, ...rest] = r
  return (
    <>
      <Cell $center $bg={k === 0 ? '#ffd080' : '#fff'} $c={k === 0 ? '#800080' : '#111'}><Latin>{no}</Latin></Cell>
      <Cell $bar><Mixed>{name}</Mixed></Cell>
      <Cell><Latin>{dia}</Latin></Cell>
      <Cell $center>{grade}</Cell>
      <Cell><Latin>{fig}</Latin></Cell>
      <ShapeCell>{shapes[k]}</ShapeCell>
      <Cell><Latin>{formula}</Latin></Cell>
      <Cell $bg={k === 0 ? '#b5f0dc' : undefined}><Mixed>{desc}</Mixed></Cell>
      {rest.map((v, j) => <Cell key={j}><Mixed>{v}</Mixed></Cell>)}
    </>
  )
}

const RebarGrid = () => (
  <Frame>
    <FrameTop>
      <GridView>
        <Grid>
          {heads.map((h, k) => <Head key={k} $hot={k === 7}><Mixed>{h}</Mixed></Head>)}
          {rows.map((r, k) => <RebarRow key={k} r={r} k={k} />)}
        </Grid>
      </GridView>
      <VScroll $w={17} $bg="#f0f0f0">
        <Chev d="M1 6l3-3 3 3" mt={6} />
        <ScrollThumb $mt={4} $h={44} />
      </VScroll>
    </FrameTop>
    <HScroll $h={16}>
      <Chev d="M6 1L3 4l3 3" ml={4} />
      <HThumb $ml={7} $w={827} />
      <Chev d="M2 1l3 3-3 3" ml={331} />
    </HScroll>
  </Frame>
)

/* ---------- status and taskbar ---------- */
const Status = styled.div`
  flex: none;
  height: 20px;
  padding-bottom: 1px;
  display: flex;
`
const StatusCell = styled.div`
  flex: none;
  box-sizing: border-box;
  width: ${p => p.$w}px;
  margin-left: ${p => p.$ml || 0}px;
  border: 1px solid #e0e0e0;
  background: linear-gradient(#fff, #f3f3f3);
  padding-left: 1px;
  display: flex;
  align-items: center;
  white-space: nowrap;
`
const TaskBar = styled.div`
  flex: none;
  height: 40px;
  background: #060f15;
  display: flex;
  align-items: stretch;
`
const StartBtn = styled.div`
  flex: none;
  width: 48px;
  background: #000;
  display: flex;
  align-items: center;
  justify-content: center;
`
const Search = styled.div`
  flex: none;
  width: 344px;
  background: #333;
  display: flex;
  align-items: center;
  padding-left: 9px;
  box-sizing: border-box;
  color: #9a9a9a;
  font-size: 13px;
`
const SearchRing = styled.div`
  width: 16px;
  height: 16px;
  border: 2px solid #e4e4e4;
  border-radius: 50%;
  margin-right: 7px;
`
const MicSlot = styled.div`
  margin-left: auto;
  margin-right: 12px;
`
const TaskBtn = styled.div`
  flex: none;
  width: 49.6px;
  box-sizing: border-box;
  display: flex;
  align-items: center;
  justify-content: center;
  background: ${p => p.$on ? '#3b4146' : 'transparent'};
  border-bottom: 2px solid ${p => p.$open ? '#6db3f2' : 'transparent'};
`
const Tray = styled.div`
  margin-left: auto;
  display: flex;
  align-items: stretch;
`
const TrayItem = styled.div`
  flex: none;
  width: ${p => p.$w}px;
  display: flex;
  align-items: center;
  justify-content: center;
  color: #f2f2f2;
  font-size: ${p => p.$fs || 12}px;
`
const Clock = styled.div`
  width: 76px;
  text-align: center;
  color: #dfe3e6;
  font-family: "Liberation Sans", sans-serif;
  font-size: 13px;
  line-height: 20px;
`
const S_ICON = 'M11 3.5C9 2 4 2.5 4 5.5S11 8 11 10.5 5.5 13 3 11.5'

const taskIcons = [
  { n: <path d="M12 12c-5-1-7-4-6-8 2-3 6-3 8 0 1 3-1 4-2 8zm0 0c5 1 7 4 6 8-2 3-6 3-8 0-1-3 1-4 2-8zm0 0c1-5 4-7 8-6 3 2 3 6 0 8-3 1-4-1-8-2zm0 0c-1 5-4 7-8 6-3-2-3-6 0-8 3-1 4 1 8 2z" fill="#e8e8e8" /> },
  { n: <><circle cx="11" cy="13" r="8" fill="none" stroke="#bbb" strokeWidth="1.5" /><circle cx="12" cy="13" r="4" fill="none" stroke="#bbb" strokeWidth="1.5" /><path d="M18 1c3 0 3 3 3 5l2 3h-9l2-3c0-2 0-5 2-5z" fill="#e8a21e" /></> },
  { n: <path d="M3 13C3 6 8 3 13 3c6 0 8 4 8 9H9c0 4 6 5 11 2v5c-7 3-17 1-17-6zM9 9h6c0-4-6-4-6 0z" fill="#1e7fd6" /> },
  { n: <><path d="M4 7h16v15H4z" fill="#fff" /><path d="M8 7a4 4 0 018 0" fill="none" stroke="#fff" strokeWidth="1.5" /><path d="M8 11h3.5v3.5H8zM12.5 11H16v3.5h-3.5zM8 15.5h3.5V19H8zM12.5 15.5H16V19h-3.5z" fill="#111" /></> },
  { open: true, n: <><path d="M2 4h8l2 2h10v16H2z" fill="#f6d77c" /><path d="M2 9h20v2H2z" fill="#fdeab0" /><path d="M8 15h8v7H8z" fill="#3fa3dd" /></> },
  { open: true, n: <path d="M14 2C7 3 3 8 4 15s8 9 13 6c3-3 3-7-1-9-3-1-5 0-6 2 2-1 4 0 4 2s-3 2-4 0c-2-3 0-7 4-8l6-1c-1-2-3-4-6-5z" fill="#23a0e8" /> },
  { n: <><rect x="3" y="3" width="18" height="18" fill="#f2b134" stroke="#8a5a10" /><path d="M6 8h12M6 12h12M6 16h8" stroke="#8a5a10" /><path d="M20 2L10 16l-2 3 3-1L22 4z" fill="#e24b2a" /></> },
  { on: true, n: <><rect x="3" y="3" width="18" height="18" rx="3" fill="#1e8fe8" /><path d="M12 6v12M6 12h12" stroke="#fff" strokeWidth="3" /></> },
  { n: <><circle cx="12" cy="12" r="10" fill="#3fb53a" /><circle cx="12" cy="12" r="6.5" fill="#d9f2c0" /><path d="M7 12h10M7 9h10M7 15h10" stroke="#3fb53a" strokeWidth="1.3" /></> }
]

const Task = () => (
  <TaskBar>
    <StartBtn>
      <Svg $s={18} viewBox="0 0 18 18"><path d="M1 3l7-1v6.5H1zM9 2l8-1v7.5H9zM1 9.5h7V16l-7-1zM9 9.5h8V17l-8-1z" fill="#fff" /></Svg>
    </StartBtn>
    <Search>
      <SearchRing />在这里输入你要搜索的内容
      <MicSlot>
        <Svg $s={16} viewBox="0 0 16 16"><path d="M6 1h4v8H6zM3.5 7c0 6 9 6 9 0M8 12v3M5 15h6" fill="none" stroke="#aaa" /></Svg>
      </MicSlot>
    </Search>
    {taskIcons.map((a, k) => (
      <TaskBtn key={k} $on={a.on} $open={a.open}>
        <Svg $s={24} viewBox="0 0 24 24">{a.n}</Svg>
      </TaskBtn>
    ))}
    <Tray>
      <TrayItem $w={26}><Svg $s={14} viewBox="0 0 14 14"><path d="M2 10l5-5 5 5" fill="none" stroke="#eee" strokeWidth="1.3" /></Svg></TrayItem>
      <TrayItem $w={24}><Svg $s={18} viewBox="0 0 18 18"><path d="M2 4v3M5 4v3M1 7h5v2H4v3H8" fill="none" stroke="#eee" /><rect x="7" y="6" width="9" height="7" fill="none" stroke="#eee" /><rect x="8" y="7" width="6" height="5" fill="#eee" /></Svg></TrayItem>
      <TrayItem $w={25}><Svg $s={16} viewBox="0 0 16 16"><path d="M1 11a10 10 0 0110-9M3.5 12.5a8 8 0 017-7M6 14a5 5 0 014-4" fill="none" stroke="#aaa" /><circle cx="10" cy="13" r="1.5" fill="#eee" /></Svg></TrayItem>
      <TrayItem $w={22}><Svg $s={16} viewBox="0 0 16 16"><path d="M1 6h3l4-3v11l-4-3H1z" fill="none" stroke="#eee" /><path d="M10 5c2 1 2 5 0 7M12 3.5c3 2 3 8 0 10" fill="none" stroke="#aaa" /></Svg></TrayItem>
      <TrayItem $w={31}><Svg $s={24} viewBox="0 0 24 24"><rect x="1" y="5" width="22" height="13" fill="none" stroke="#eee" /><path d="M4 9h16M4 12h16" stroke="#eee" strokeDasharray="1.5 1" /><path d="M7 15h10" stroke="#eee" /></Svg></TrayItem>
      <TrayItem $w={26} $fs={14}>中</TrayItem>
      <TrayItem $w={31}><Svg $s={16} viewBox="0 0 16 16"><rect width="16" height="16" rx="3" fill="#e8461e" /><path d={S_ICON} fill="none" stroke="#fff" strokeWidth="2.2" /></Svg></TrayItem>
      <TrayItem $w={76}><Clock>17:01<br />2017/9/29</Clock></TrayItem>
      <TrayItem $w={38}><Svg $s={18} viewBox="0 0 18 18"><path d="M2 3h14v11h-5l-2 2-2-2H2z" fill="none" stroke="#eee" /></Svg></TrayItem>
      <TrayItem $w={14} />
    </Tray>
  </TaskBar>
)

/* ---------- things floating above the window ---------- */
const Badge = styled.div`
  position: absolute;
  left: 594px;
  top: -23px;
  width: 38px;
  height: 38px;
  border-radius: 50%;
  background: radial-gradient(circle at 50% 60%, #58c84a, #2ea52e);
  border: 3px solid #cfd8cf;
  color: #fff;
  font-family: "Liberation Sans", sans-serif;
  font-size: 11px;
  font-weight: 700;
  text-align: center;
  display: flex;
  align-items: flex-end;
  justify-content: center;
  line-height: 20px;
`
const Ime = styled.div`
  position: absolute;
  left: 612px;
  top: 38px;
  height: 24px;
  width: 184px;
  background: #fff;
  box-shadow: 0 0 2px #9ab;
  border-radius: 2px;
  display: flex;
  align-items: center;
  color: #1b70d0;
  gap: 6px;
`
const ImeLogo = styled.div`
  width: 28px;
  height: 24px;
  margin-top: 4px;
  background: #e8461e;
  border-radius: 5px;
  display: flex;
  align-items: center;
  justify-content: center;
`
const ImeText = styled.span`
  font-weight: 700;
  font-size: 13px;
`
const Main = styled.div`
  flex: none;
  width: 1222px;
  margin-left: 4px;
  display: flex;
  flex-direction: column;
`

const App = () => (
  <Screen>
    <GlobalStyle />
    <TitleBar>
      <Svg $s={14} viewBox="0 0 16 16"><rect width="16" height="16" rx="2" fill="#1a86e0" /><path d="M8 3v10M3 8h10" stroke="#fff" strokeWidth="2.4" /></Svg>
      <TitleText>广联达BIM钢筋算量软件 GGJ2013 - [C:\Users\Administrator.PC-20141127NRHM\Desktop\白龙村-2017-09-25-13-27-07(2166版)_16G.GGJ12]</TitleText>
      <WinButtons>
        <WinButton><Svg $s={12} viewBox="0 0 12 12"><path d="M1 6h10" stroke="#222" /></Svg></WinButton>
        <WinButton><Svg $s={12} viewBox="0 0 12 12"><path d="M1.5 3.5h7v7h-7zM3.5 3.5v-2h7v7h-2" fill="none" stroke="#222" /></Svg></WinButton>
        <WinButton><Svg $s={12} viewBox="0 0 12 12"><path d="M1 1l10 10M11 1L1 11" stroke="#222" /></Svg></WinButton>
      </WinButtons>
    </TitleBar>
    <Bar h={29} origin={0} strips={menuStrips} />
    <Bar h={30} origin={0} strips={topStrips} />
    <Workspace>
      <Side />
      <Main>
        <Bar h={26} origin={144} strips={editStrips} />
        <Bar h={28} origin={144} strips={attrStrips} />
        <Bar h={29} origin={144} strips={drawStrips} />
        <Scene />
        <Bar h={28} origin={144} strips={snapStrips} />
        <Panel>
          <PanelGrip>
            <Svg $s={12} viewBox="0 0 12 12"><rect x=".5" y=".5" width="11" height="11" fill="#f6e4de" stroke="#b05a4a" /><path d="M3 3l6 6M9 3L3 9" stroke="#333" /></Svg>
            <GripDots />
          </PanelGrip>
          <PanelBody>
            <Bar h={24} origin={157} strips={rebarBar} />
            <RebarGrid />
          </PanelBody>
        </Panel>
      </Main>
    </Workspace>
    <Status>
      <StatusCell $w={147}><Latin>X=92943 Y=11119</Latin></StatusCell>
      <StatusCell $w={77} $ml={4}><Mixed>层高:3.55m</Mixed></StatusCell>
      <StatusCell $w={97} $ml={2}><Mixed>底标高:-3.58m</Mixed></StatusCell>
      <StatusCell $w={48} $ml={3}><Latin>1(1)</Latin></StatusCell>
      <StatusCell $w={913} $ml={2}>按鼠标左键指定第一个角点，或拾取构件图元</StatusCell>
      <StatusCell $w={70} $ml={3}><Latin>720.9 FPS</Latin></StatusCell>
    </Status>
    <Task />

    <Badge>70</Badge>
    <Ime>
      <ImeLogo>
        <Svg $s={16} viewBox="0 0 16 16"><path d={S_ICON} fill="none" stroke="#fff" strokeWidth="2.6" /></Svg>
      </ImeLogo>
      <ImeText>英</ImeText>
      <ImeText>’,</ImeText>
      <Svg $s={14} viewBox="0 0 16 16"><rect x="5" y="1" width="6" height="10" rx="3" fill="#2a80d8" /><path d="M3 8c0 6 10 6 10 0M8 13v2" fill="none" stroke="#2a80d8" strokeWidth="1.5" /></Svg>
      <Svg $s={16} viewBox="0 0 16 16"><rect x="1" y="2" width="14" height="12" rx="2" fill="#2a80d8" /><path d="M3 5h10M3 8h10M5 11h6" stroke="#fff" strokeDasharray="1.5 1" /></Svg>
      <Svg $s={16} viewBox="0 0 16 16"><circle cx="7" cy="4" r="3" fill="#a9b8c8" /><path d="M2 14c0-4 2-6 5-6s5 2 5 6z" fill="#a9b8c8" /><rect x="9" y="9" width="6" height="5" fill="#d7dfe8" /></Svg>
      <Svg $s={15} viewBox="0 0 16 16"><path d="M5 1l3 2 3-2 4 3-2 3-1-1v9H4V6L3 7 1 4z" fill="#1b70d0" /></Svg>
      <Svg $s={15} viewBox="0 0 16 16"><path d="M15 4l-3 3-3-1-1-3 3-3C8 -1 5 2 6 6L1 12c-1 2 1 4 3 3l6-5c3 1 7-2 5-6z" fill="#1b70d0" /></Svg>
    </Ime>
  </Screen>
)

export default App
